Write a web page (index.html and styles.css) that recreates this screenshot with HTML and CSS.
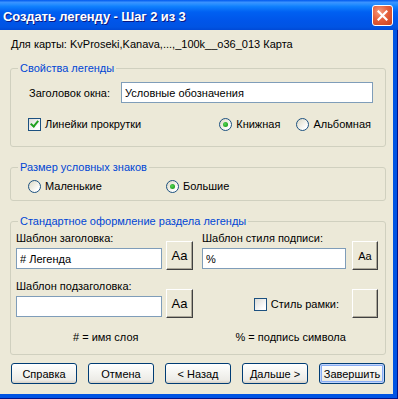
FILE: index.html
```html
<!DOCTYPE html>
<html lang="ru">
<head>
  <meta charset="UTF-8" />
  <title>Создать легенду - Шаг 2 из 3</title>
  <link rel="stylesheet" href="styles.css">
</head>
<body>
  <div class="window">
    <div class="titlebar">
      <span class="title">Создать легенду - Шаг 2 из 3</span>
      <button class="close-btn" aria-label="Закрыть">
        <svg width="11" height="11" viewBox="0 0 11 11"><path d="M1.5 1.5 L9.5 9.5 M9.5 1.5 L1.5 9.5" stroke="#fff" stroke-width="2.2" stroke-linecap="square"/></svg>
      </button>
    </div>
    <div class="client">
      <div class="map-line">Для карты: KvProseki,Kanava,...,_100k__o36_013 Карта</div>

      <fieldset class="group group-props">
        <legend>Свойства легенды</legend>
        <div class="row title-row">
          <span class="label">Заголовок окна:</span>
          <input class="text-input wide" type="text" value="Условные обозначения">
        </div>
        <div class="row options-row">
          <label class="check"><span class="box checked"></span>Линейки прокрутки</label>
          <label class="radio portrait"><span class="dot on"></span>Книжная</label>
          <label class="radio landscape"><span class="dot"></span>Альбомная</label>
        </div>
      </fieldset>

      <fieldset class="group group-size">
        <legend>Размер условных знаков</legend>
        <div class="row size-row">
          <label class="radio small"><span class="dot"></span>Маленькие</label>
          <label class="radio"><span class="dot on"></span>Большие</label>
        </div>
      </fieldset>

      <fieldset class="group group-style">
        <legend>Стандартное оформление раздела легенды</legend>
        <div class="style-grid">
          <div class="field">
            <span class="label">Шаблон заголовка:</span>
            <input class="text-input half" type="text" value="# Легенда">
          </div>
          <button class="font-btn">Aa</button>
          <div class="field right-field">
            <span class="label">Шаблон стиля подписи:</span>
            <input class="text-input half-right" type="text" value="%">
          </div>
          <button class="font-btn narrow small-aa">Aa</button>

          <div class="field">
            <span class="label">Шаблон подзаголовка:</span>
            <input class="text-input half" type="text" value="">
          </div>
          <button class="font-btn">Aa</button>
          <div class="frame-field">
            <label class="check"><span class="box"></span>Стиль рамки:</label>
          </div>
          <button class="font-btn narrow"></button>
        </div>
        <div class="hints">
          <span class="hint-left"># = имя слоя</span>
          <span class="hint-right">% = подпись символа</span>
        </div>
      </fieldset>

      <div class="buttons">
        <button class="xp-btn">Справка</button>
        <button class="xp-btn">Отмена</button>
        <button class="xp-btn">&lt; Назад</button>
        <button class="xp-btn">Дальше &gt;</button>
        <button class="xp-btn default">Завершить</button>
      </div>
    </div>
  </div>
</body>
</html>
```

FILE: styles.css
```css
body {
  margin: 0;
  background: #fff;
  font-family: "Liberation Sans", Arial, sans-serif;
  font-size: 11px;
  color: #000;
}
.window {
  width: 398px;
  height: 399px;
  background: #0054e3;
  display: flex;
  flex-direction: column;
  box-shadow: inset -1px -1px 0 #00138c;
}
.titlebar {
  height: 30px;
  display: flex;
  align-items: center;
  justify-content: space-between;
  padding: 0 5px 0 3px;
  background: linear-gradient(to bottom, #0058ee 0%, #3a93ff 8%, #288eff 14%, #0f7ffd 22%, #0060f2 40%, #0055e9 70%, #0054e3 90%, #0049d6 100%);
}
.title {
  color: #fff;
  font-weight: bold;
  font-size: 13px;
  text-shadow: 1px 1px 0 #0a1883;
  padding-top: 2px;
  letter-spacing: -0.1px;
}
.close-btn {
  width: 21px;
  height: 21px;
  padding: 0;
  border: 1px solid #fff;
  border-radius: 3px;
  background: radial-gradient(circle at 35% 30%, #f59b7e 0%, #e5603c 45%, #c8401f 100%);
  display: flex;
  align-items: center;
  justify-content: center;
  margin-top: 1px;
}
.client {
  width: 393px;
  height: 364px;
  background: #ece9d8;
  box-sizing: border-box;
  padding: 8px 0 0 10px;
}
.map-line {
  padding-left: 1px;
  height: 13px;
  line-height: 13px;
}
.group {
  width: 376px;
  box-sizing: border-box;
  margin: 0;
  border: 1px solid #d0d0bf;
  border-radius: 3px;
  padding: 0 7px 0 5px;
}
.group legend {
  color: #0046d5;
  padding: 0 2px;
  line-height: 13px;
  margin-left: 2px;
}
.group-props {
  margin-top: 11px;
  height: 85px;
}
.row {
  display: flex;
  align-items: center;
}
.title-row {
  margin-top: 7px;
  padding-left: 13px;
}
.title-row .label {
  width: 92px;
}
.text-input {
  box-sizing: border-box;
  height: 21px;
  border: 1px solid #7f9db9;
  background: #fff;
  font: inherit;
  padding: 0 3px;
  outline: none;
}
.wide {
  width: 252px;
}
.options-row {
  margin-top: 15px;
  padding-left: 12px;
}
.check, .radio {
  display: flex;
  align-items: center;
  gap: 4px;
  line-height: 13px;
}
.box {
  width: 11px;
  height: 11px;
  border: 1px solid #1c5180;
  background: linear-gradient(135deg, #dcdcd7 0%, #fff 80%);
  position: relative;
}
.box.checked::after {
  content: "";
  position: absolute;
  left: 3px;
  top: 0px;
  width: 3px;
  height: 6px;
  border: solid #21a121;
  border-width: 0 2px 2px 0;
  transform: rotate(40deg);
}
.dot {
  width: 11px;
  height: 11px;
  border: 1px solid #1c5180;
  border-radius: 50%;
  background: linear-gradient(135deg, #dcd9c5 0%, #fff 80%);
  display: flex;
  align-items: center;
  justify-content: center;
}
.dot.on::after {
  content: "";
  width: 5px;
  height: 5px;
  border-radius: 50%;
  background: radial-gradient(circle at 40% 40%, #55d655 0%, #21a121 70%);
}
.portrait {
  margin-left: auto;
  margin-right: 0;
}
.landscape {
  margin-left: 16px;
  margin-right: 7px;
}
.group-size {
  margin-top: 14px;
  height: 40px;
}
.size-row {
  margin-top: 6px;
  padding-left: 12px;
}
.size-row .small {
  width: 138px;
}
.group-style {
  margin-top: 14px;
  height: 140px;
  padding: 0 6px 0 5px;
}
.style-grid {
  display: grid;
  grid-template-columns: 146px 31px 153px 32px;
  row-gap: 11px;
  margin-top: 4px;
  align-items: end;
}
.style-grid .font-btn {
  justify-self: end;
}
.field {
  display: flex;
  flex-direction: column;
  gap: 3px;
  line-height: 13px;
}
.right-field {
  justify-self: end;
}
.half {
  width: 146px;
}
.half-right {
  width: 144px;
}
.font-btn {
  width: 27px;
  height: 29px;
  padding: 0;
  margin-bottom: -1px;
  background: #ece9d8;
  border: 1px solid;
  border-color: #fff #404040 #404040 #fff;
  box-shadow: inset -1px -1px 0 #aca899;
  font-family: "Liberation Sans", Arial, sans-serif;
  font-size: 13px;
  color: #000;
}
.font-btn.narrow {
  width: 26px;
}
.font-btn.small-aa {
  font-size: 11px;
}
.frame-field {
  display: flex;
  justify-content: flex-end;
  padding-bottom: 6px;
  padding-right: 7px;
}
.hints {
  display: flex;
  margin-top: 14px;
  line-height: 13px;
}
.hint-left {
  margin-left: 57px;
}
.hint-right {
  margin-left: 97px;
}
.buttons {
  display: flex;
  gap: 11px;
  margin-top: 8px;
  padding-left: 1px;
}
.xp-btn {
  width: 66px;
  height: 21px;
  padding: 0;
  border: 1px solid #003c74;
  border-radius: 3px;
  background: linear-gradient(to bottom, #fff 0%, #f6f6f3 40%, #ecebe6 85%, #d6d0c5 100%);
  font-family: "Liberation Sans", Arial, sans-serif;
  font-size: 11px;
  color: #000;
}
.xp-btn.default {
  box-shadow: inset 0 0 0 1px #c2d5fc, inset 0 0 0 2px #89adf4;
}
```
